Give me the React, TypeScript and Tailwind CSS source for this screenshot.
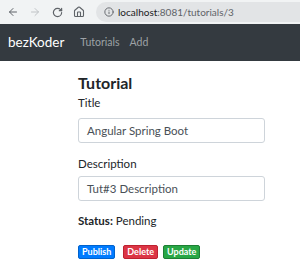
import { ArrowLeft, ArrowRight, RotateCw, Home, Info } from 'lucide-react';

const App = () => {
  return (
    <div className="w-[300px] h-[273px] overflow-hidden bg-white font-['Lato','Noto_Sans',sans-serif] text-[#212529]">
      {/* browser chrome */}
      <div className="h-[24px] bg-[#f1f3f4] flex items-center pl-[7px]">
        <ArrowLeft className="w-[12px] h-[12px] text-[#5f6368]" strokeWidth={2} />
        <ArrowRight className="w-[12px] h-[12px] text-[#c0c3c6] ml-[10px]" strokeWidth={2} />
        <RotateCw className="w-[11px] h-[11px] text-[#5f6368] ml-[11px]" strokeWidth={2.6} />
        <Home className="w-[12px] h-[12px] text-[#5f6368] ml-[10px]" strokeWidth={2.2} />
        <div className="ml-[11px] flex-1 h-[20px] rounded-l-full bg-[#e2e4e6] flex items-center pl-[8px] text-[10px] text-[#5f6368]">
          <Info className="w-[10px] h-[10px]" strokeWidth={2.2} />
          <span className="ml-[4px] text-[#202124]">localhost</span>
          <span>:8081/tutorials/3</span>
        </div>
      </div>

      {/* navbar */}
      <nav className="h-[37px] bg-[#343a40] flex items-center pl-[8px]">
        <span className="text-white text-[13.5px] leading-none">bezKoder</span>
        <span className="ml-[16px] text-[10.5px] text-[#9da2a6]">Tutorials</span>
        <span className="ml-[10px] text-[10.5px] text-[#9da2a6]">Add</span>
      </nav>

      <div className="pl-[78px] pr-[35px] pt-[12px]">
        <h4 className="text-[16px] font-bold leading-[20px]">Tutorial</h4>
        <div className="mt-[2px] text-[11.5px] leading-[16px]">Title</div>
        <div className="mt-[7px] h-[25px] border border-[#ced4da] rounded-[3px] flex items-center px-[8px] text-[11.5px] text-[#495057]">
          Angular Spring Boot
        </div>
        <div className="mt-[13px] text-[11.5px] leading-[16px]">Description</div>
        <div className="mt-[4px] h-[25px] border border-[#ced4da] rounded-[3px] flex items-center px-[8px] text-[11.5px] text-[#495057]">
          Tut#3 Description
        </div>
        <div className="mt-[12px] text-[11.5px] leading-[16px]">
          <span className="font-bold">Status:</span> Pending
        </div>
        <div className="mt-[16px] flex">
          <span className="px-[3px] h-[14px] leading-[12px] rounded-[2px] border border-[#0062cc] bg-[#007bff] text-white text-[9px] font-bold">Publish</span>
          <span className="ml-[8px] px-[3px] h-[14px] leading-[12px] rounded-[2px] border border-[#bd2130] bg-[#dc3545] text-white text-[9px] font-bold">Delete</span>
          <span className="ml-[5px] px-[3px] h-[14px] leading-[12px] rounded-[2px] border border-[#1e7e34] bg-[#28a745] text-white text-[9px] font-bold">Update</span>
        </div>
      </div>
    </div>
  );
};

export default App;
